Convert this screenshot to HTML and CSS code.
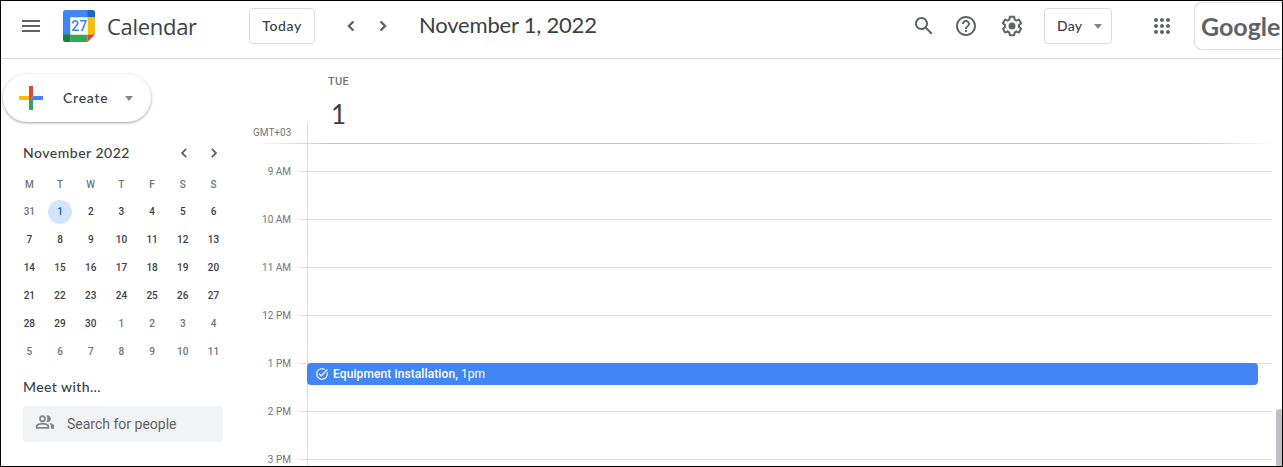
FILE: index.html
```
<!DOCTYPE html>
<html lang="en">
<head>
<meta charset="utf-8">
<title>Calendar</title>
<link rel="stylesheet" href="styles.css">
</head>
<body>
<div class="app">
  <header class="topbar">
    <svg class="menu" width="24" height="24" viewBox="0 0 24 24"><path d="M3 18h18v-2H3v2zm0-5h18v-2H3v2zm0-7v2h18V6H3z"/></svg>
    <svg class="logo" width="32" height="32" viewBox="0 0 32 32">
      <path fill="#4285f4" d="M2.500 0H25v7.500H7.500V25H0V2.500A2.500 2.500 0 0 1 2.500 0z"/>
      <path fill="#1967d2" d="M24.500 0h5A2.500 2.500 0 0 1 32 2.500v5h-7.500z"/>
      <path fill="#fbbc04" d="M24.500 7.500H32v17h-7.500z"/>
      <path fill="#34a853" d="M7.500 24.500h17V32h-17z"/>
      <path fill="#188038" d="M0 24.500h7.500V32h-5A2.500 2.500 0 0 1 0 29.500z"/>
      <path fill="#ea4335" d="M24.500 24.500H32L24.500 32z"/>
      <path fill="#fff" d="M7.500 7.500h17v17h-17z"/>
      <text class="logo-day" x="16.200" y="20.500" text-anchor="middle">27</text>
    </svg>
    <span class="brand">Calendar</span>
    <button class="btn today">Today</button>
    <svg class="prev" width="20" height="20" viewBox="0 0 24 24"><path d="M15.410 7.410L14 6l-6 6 6 6 1.410-1.410L10.830 12z"/></svg>
    <svg class="next" width="20" height="20" viewBox="0 0 24 24"><path d="M10 6L8.590 7.410 13.170 12l-4.580 4.590L10 18l6-6z"/></svg>
    <h1 class="date">November 1, 2022</h1>
    <div class="tools">
      <svg width="24" height="24" viewBox="0 0 24 24"><path d="M20.490 19l-5.730-5.730C15.530 12.200 16 10.910 16 9.500 16 5.910 13.090 3 9.500 3S3 5.910 3 9.500 5.910 16 9.500 16c1.410 0 2.700-.47 3.770-1.240L19 20.490 20.490 19zM5 9.500C5 7.010 7.010 5 9.500 5S14 7.010 14 9.500 11.990 14 9.500 14 5 11.990 5 9.500z"/></svg>
      <svg width="24" height="24" viewBox="0 0 24 24"><path d="M11 18h2v-2h-2v2zm1-16C6.480 2 2 6.480 2 12s4.480 10 10 10 10-4.480 10-10S17.520 2 12 2zm0 18c-4.410 0-8-3.590-8-8s3.590-8 8-8 8 3.590 8 8-3.590 8-8 8zm0-14c-2.210 0-4 1.790-4 4h2c0-1.100.9-2 2-2s2 .9 2 2c0 2-3 1.750-3 5h2c0-2.250 3-2.500 3-5 0-2.210-1.790-4-4-4z"/></svg>
      <svg width="24" height="24" viewBox="0 0 24 24"><path d="M13.850 22.250h-3.700c-.74 0-1.360-.54-1.450-1.270l-.27-1.890c-.27-.14-.53-.29-.79-.46l-1.800.72c-.7.26-1.470-.03-1.810-.65L2.200 15.530c-.35-.66-.2-1.440.36-1.880l1.530-1.190c-.01-.15-.02-.3-.02-.46 0-.15.010-.31.020-.46l-1.520-1.190c-.59-.45-.74-1.260-.37-1.880l1.850-3.190c.34-.62 1.110-.9 1.790-.63l1.810.73c.26-.17.52-.32.78-.46l.27-1.910c.09-.7.71-1.250 1.440-1.250h3.700c.74 0 1.360.54 1.450 1.270l.27 1.890c.27.14.53.29.79.46l1.800-.72c.71-.26 1.480.03 1.820.65l1.840 3.180c.36.66.2 1.440-.36 1.880l-1.520 1.190c.1.150.02.3.02.46s-.1.310-.02.46l1.520 1.190c.56.45.72 1.230.37 1.860l-1.860 3.220c-.34.62-1.110.9-1.800.63l-1.800-.72c-.26.17-.52.32-.78.46l-.27 1.910c-.1.680-.72 1.220-1.460 1.220zm-3.230-2h2.760l.37-2.550.53-.22c.44-.18.88-.44 1.340-.78l.45-.34 2.380.96 1.380-2.400-2.030-1.580.07-.56c.03-.26.06-.51.06-.78s-.03-.53-.06-.78l-.07-.56 2.030-1.580-1.390-2.400-2.390.96-.45-.35c-.42-.32-.87-.58-1.330-.77l-.52-.22-.37-2.550h-2.760l-.37 2.550-.53.210c-.44.190-.88.440-1.340.790l-.45.330-2.380-.95-1.390 2.390 2.030 1.580-.07.560a7 7 0 0 0-.06.790c0 .26.020.53.060.78l.07.560-2.030 1.580 1.380 2.400 2.390-.96.450.35c.43.330.86.580 1.330.77l.53.220z"/><circle cx="12" cy="12" r="3.500"/></svg>
    </div>
    <button class="btn view">Day<i class="caret"></i></button>
    <svg class="apps" width="24" height="24" viewBox="0 0 24 24"><path d="M6 8c1.100 0 2-.9 2-2s-.9-2-2-2-2 .9-2 2 .9 2 2 2zm6 12c1.100 0 2-.9 2-2s-.9-2-2-2-2 .9-2 2 .9 2 2 2zm-6 0c1.100 0 2-.9 2-2s-.9-2-2-2-2 .9-2 2 .9 2 2 2zm0-6c1.100 0 2-.9 2-2s-.9-2-2-2-2 .9-2 2 .9 2 2 2zm6 0c1.100 0 2-.9 2-2s-.9-2-2-2-2 .9-2 2 .9 2 2 2zm4-8c0 1.100.9 2 2 2s2-.9 2-2-.9-2-2-2-2 .9-2 2zm-4 2c1.100 0 2-.9 2-2s-.9-2-2-2-2 .9-2 2 .9 2 2 2zm6 6c1.100 0 2-.9 2-2s-.9-2-2-2-2 .9-2 2 .9 2 2 2zm0 6c1.100 0 2-.9 2-2s-.9-2-2-2-2 .9-2 2 .9 2 2 2z"/></svg>
    <div class="account">Google</div>
  </header>
  <div class="body">
    <aside class="side">
      <button class="create">
        <svg width="36" height="36" viewBox="0 0 36 36"><path fill="#34a853" d="M16 16v14h4V20z"/><path fill="#4285f4" d="M30 16H20l-4 4h14z"/><path fill="#fbbc05" d="M6 16v4h10l4-4z"/><path fill="#ea4335" d="M20 16V6h-4v14z"/></svg>
        <span class="create-label">Create</span><i class="caret"></i>
      </button>
      <div class="mini-head">
        <span class="mini-title">November 2022</span>
        <svg width="18" height="18" viewBox="0 0 24 24"><path d="M15.410 7.410L14 6l-6 6 6 6 1.410-1.410L10.830 12z"/></svg>
        <svg width="18" height="18" viewBox="0 0 24 24"><path d="M10 6L8.590 7.410 13.170 12l-4.580 4.590L10 18l6-6z"/></svg>
      </div>
      <div class="mini dow"><span>M</span><span>T</span><span>W</span><span>T</span><span>F</span><span>S</span><span>S</span></div>
      <div class="mini days">
        <span class="out">31</span><span class="sel">1</span><span>2</span><span>3</span><span>4</span><span>5</span><span>6</span>
        <span>7</span><span>8</span><span>9</span><span>10</span><span>11</span><span>12</span><span>13</span>
        <span>14</span><span>15</span><span>16</span><span>17</span><span>18</span><span>19</span><span>20</span>
        <span>21</span><span>22</span><span>23</span><span>24</span><span>25</span><span>26</span><span>27</span>
        <span>28</span><span>29</span><span>30</span><span class="out">1</span><span class="out">2</span><span class="out">3</span><span class="out">4</span>
        <span class="out">5</span><span class="out">6</span><span class="out">7</span><span class="out">8</span><span class="out">9</span><span class="out">10</span><span class="out">11</span>
      </div>
      <div class="meet">Meet with...</div>
      <div class="people">
        <svg width="20" height="20" viewBox="0 0 24 24"><path fill-rule="evenodd" d="M9 12a4 4 0 1 0 0-8 4 4 0 0 0 0 8zm0-6a2 2 0 1 1 0 4 2 2 0 0 1 0-4zM9 13c-2.700 0-8 1.300-8 4v3h16v-3c0-2.700-5.300-4-8-4zm6 5H3v-1c0-.7 3.100-2 6-2s6 1.300 6 2zM13.500 11.700A6 6 0 0 0 13.500 4.300 4 4 0 1 1 13.500 11.700zM16.700 13.300C18.200 14.100 19 15.300 19 17v3h4v-3c0-2.200-3.500-3.400-6.300-3.700z"/></svg>
        <span>Search for people</span>
      </div>
    </aside>
    <main class="day">
      <div class="day-head">
        <div class="zone">GMT+03</div>
        <div class="day-label"><div class="weekday">TUE</div><div class="number">1</div><div class="stub"></div></div>
      </div>
      <div class="rule"></div>
      <div class="hours">
        <div class="hour"><span>9 AM</span></div>
        <div class="hour"><span>10 AM</span></div>
        <div class="hour"><span>11 AM</span></div>
        <div class="hour"><span>12 PM</span></div>
        <div class="hour"><span>1 PM</span></div>
        <div class="hour"><span>2 PM</span></div>
        <div class="hour"><span>3 PM</span></div>
        <div class="axis"></div>
        <div class="event">
          <svg width="14" height="14" viewBox="0 0 24 24"><path d="M22 5.180L10.590 16.600l-4.240-4.240 1.410-1.410 2.830 2.830 10-10L22 5.180zm-2.210 5.040c.13.570.210 1.170.210 1.780 0 4.420-3.580 8-8 8s-8-3.580-8-8 3.580-8 8-8c1.580 0 3.040.46 4.280 1.250l1.440-1.440A9.900 9.900 0 0 0 12 2C6.480 2 2 6.480 2 12s4.480 10 10 10 10-4.480 10-10c0-1.190-.22-2.330-.6-3.390l-1.610 1.610z"/></svg>
          <span><b>Equipment installation,</b> 1pm</span>
        </div>
        <div class="scrollbar"></div>
      </div>
    </main>
  </div>
</div>
</body>
</html>
```
FILE: styles.css
```
* { box-sizing: border-box; }
body { margin: 0; background: #fff; color: #3c4043; font-family: Roboto, sans-serif; }
.app { width: 1283px; height: 467px; border: 1px solid #000; overflow: hidden; display: flex; flex-direction: column; }
svg { display: block; flex: none; fill: #5f6368; }
button { font: inherit; color: inherit; background: #fff; padding: 0; margin: 0; }

.topbar { flex: none; height: 58px; padding: 0 0 7px 18px; display: flex; align-items: center; border-bottom: 1px solid #dadce0; }
.logo { margin-left: 20px; }
.logo-day { font: 500 14px Roboto, sans-serif; fill: #4285f4; }
.brand { width: 142px; margin-left: 12px; font: 22px/28px "Open Sans", sans-serif; letter-spacing: -.3px; white-space: nowrap; }
.btn { flex: none; height: 36px; border: 1px solid #dadce0; border-radius: 4px; font: 500 14px/20px Lato, sans-serif; }
.today { width: 66px; letter-spacing: .6px; }
.prev { margin-left: 26px; stroke: #5f6368; stroke-width: 1; }
.next { margin-left: 12px; stroke: #5f6368; stroke-width: 1; }
.date { width: 300px; margin: -2px 0 0 26px; font: 400 22px/28px Lato, sans-serif; letter-spacing: -.2px; white-space: nowrap; }
.tools { display: flex; gap: 22px; margin-left: auto; }
.tools svg:first-child { margin-right: -4px; }
.view { width: 68px; margin-left: 20px; padding-left: 12px; display: flex; align-items: center; gap: 12px; letter-spacing: .25px; }
.caret { width: 0; border: 4.500px solid transparent; border-top: 5px solid #80868b; border-bottom: 0; }
.apps { margin-left: 38px; }
.account { flex: none; width: 88px; height: 48px; margin-left: 20px; padding-left: 6px; border: 1px solid #dadce0; border-right: 0; border-radius: 8px 0 0 8px; font: 700 25px/46px Lato, sans-serif; color: #5f6368; }

.body { flex: 1; min-height: 0; display: flex; }
.side { width: 251px; flex: none; padding: 15px 0 0 2px; }
.create { width: 148px; height: 48px; padding-left: 10px; border: 0; border-radius: 24px; display: flex; align-items: center; box-shadow: 0 1px 2px rgba(60,64,67,.3), 0 1px 3px 1px rgba(60,64,67,.15); font: 500 14px/20px Lato, sans-serif; letter-spacing: .75px; }
.create-label { width: 62px; margin-left: 14px; padding-bottom: 1px; text-align: left; }
.mini-head { display: flex; align-items: center; gap: 12px; height: 20px; margin: 21px 0 0 20px; }
.mini-head svg { stroke: #5f6368; stroke-width: .6; }
.mini-title { width: 140px; font: 500 14px/20px Lato, sans-serif; letter-spacing: .5px; white-space: nowrap; }
.mini { display: grid; grid-template-columns: repeat(7, 30.700px); grid-auto-rows: 28px; margin-left: 11px; place-items: center; font-size: 10px; font-weight: 500; }
.dow { margin: 8px 0 -1px 11px; color: #70757a; }
.mini span { width: 24px; height: 24px; line-height: 24px; text-align: center; }
.out { color: #70757a; }
.sel { background: #d2e3fc; color: #185abc; border-radius: 50%; }
.meet { margin: 11px 0 0 20px; font: 500 14px/20px Lato, sans-serif; letter-spacing: .4px; }
.people { width: 200px; height: 36px; margin: 9px 0 0 20px; padding-left: 12px; border-radius: 4px; background: #f1f3f4; color: #5f6368; font-size: 14px; display: flex; align-items: center; gap: 12px; }
.people svg { fill: #80868b; margin-top: -4px; }

.day { flex: 1; min-width: 0; display: flex; flex-direction: column; }
.day-head { height: 84px; display: flex; }
.zone { width: 55px; padding: 64px 0 0 1px; font-size: 10px; line-height: 20px; color: #70757a; }
.day-label { flex: 1; display: flex; flex-direction: column; align-items: flex-start; }
.weekday { margin: 13px 0 0 21px; font-size: 11px; line-height: 20px; font-weight: 500; letter-spacing: .3px; color: #70757a; }
.number { height: 31px; margin-left: 24px; padding-top: 7px; font: 26px/30px Lato, sans-serif; }
.stub { width: 1px; height: 20px; background: #dadce0; }
.rule { flex: none; width: 1020px; height: 1px; background: linear-gradient(90deg, transparent, #c0c2c5 8%, #c0c2c5 92%, transparent); }
.hours { position: relative; flex: 1; min-height: 0; overflow: hidden; padding-top: 17px; color: #70757a; font-size: 10px; }
.hour { height: 48px; line-height: 22px; display: flex; align-items: flex-start; }
.hour span { width: 39px; margin-right: 8px; text-align: right; white-space: nowrap; }
.hour::after { content: ""; width: 973px; height: 1px; margin-top: 10px; background: #dadce0; }
.axis { position: absolute; left: 55px; top: 0; bottom: 0; width: 1px; background: #dadce0; }
.event { position: absolute; left: 55px; top: 219px; width: 951px; height: 22px; padding-left: 8px; display: flex; align-items: center; gap: 4px; border-radius: 4px; background: #4285f4; color: #fff; font-size: 12px; line-height: 16px; }
.event b { font-weight: 500; letter-spacing: .1px; }
.event svg { fill: #fff; }
.scrollbar { position: absolute; right: 0; top: 265px; width: 6px; height: 80px; border-radius: 4px 0 0 0; background: #bdc1c6; }
```
